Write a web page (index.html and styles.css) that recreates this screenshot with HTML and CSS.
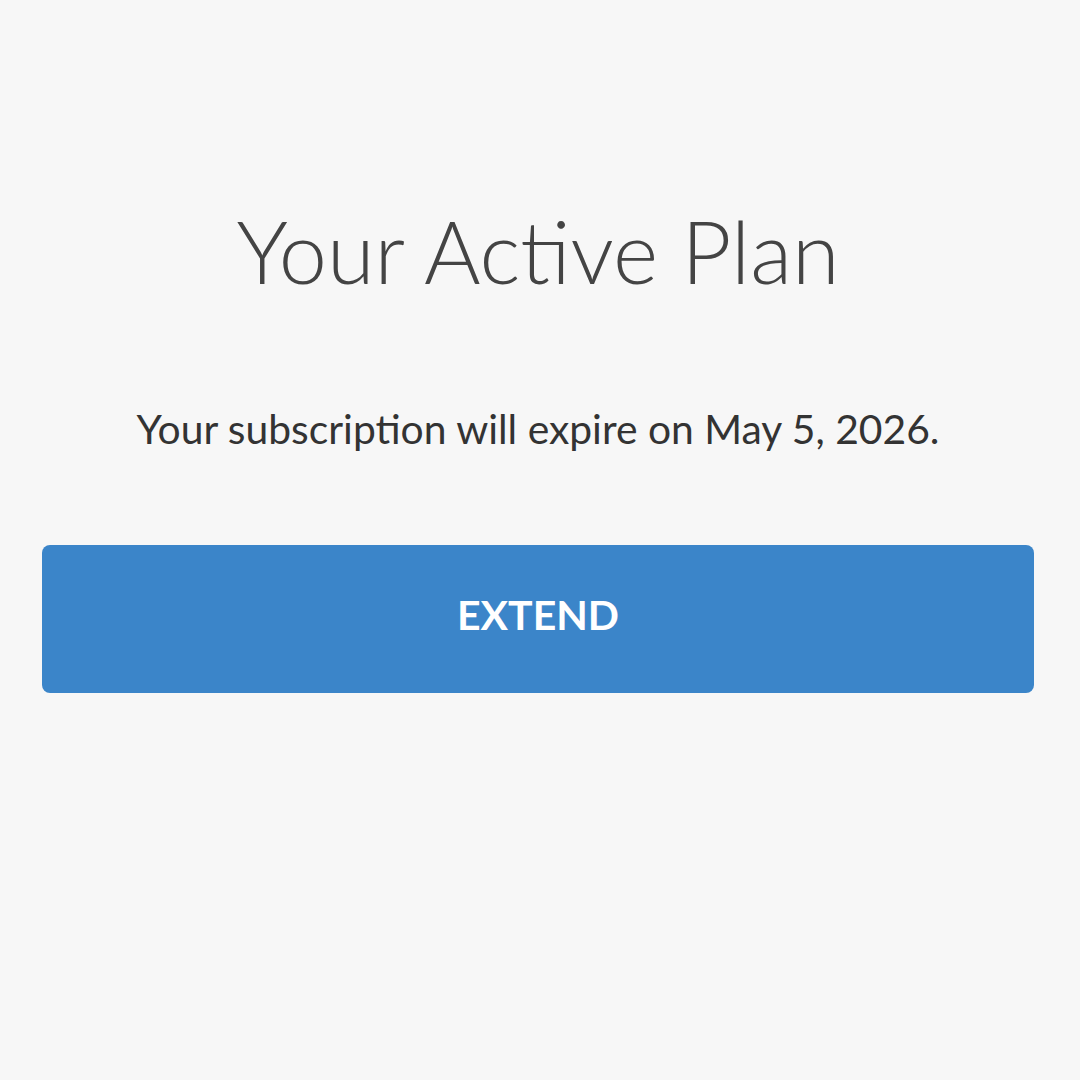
FILE: index.html
```html
<!DOCTYPE html>
<html lang="en">
  <head>
    <meta charset="UTF-8" />
    <meta name="viewport" content="width=device-width, initial-scale=1.0" />
    <title>Your Active Plan</title>
    <link rel="stylesheet" href="styles.css">
  </head>
  <body>
    <div id="wrap">
      <div class="plan">
        <h1 class="plan-title">Your Active Plan</h1>
        <p class="plan-desc">Your subscription will expire on May 5, 2026.</p>
        <button class="plan-btn" type="button">EXTEND</button>
      </div>
    </div>
  </body>
</html>
```

FILE: styles.css
```css
* {
  margin: 0;
  padding: 0;
  box-sizing: border-box;
}
html,
body {
  height: 100%;
}
body {
  background: #f7f7f7;
  font-family: Lato, "Noto Sans", sans-serif;
  color: #333;
}
#wrap {
  padding: 196px 46px 0 42px;
}
.plan {
  display: flex;
  flex-direction: column;
  align-items: center;
}
.plan-title {
  font-size: 86.5px;
  font-weight: 300;
  line-height: 110px;
  color: #444;
}
.plan-desc {
  margin-top: 98px;
  font-size: 40.8px;
  line-height: 50px;
  color: #333;
}
.plan-btn {
  margin-top: 91px;
  width: 100%;
  height: 148px;
  padding-bottom: 10px;
  border: 0 none;
  border-radius: 8px;
  background: #3b85c9;
  color: #fff;
  font-family: inherit;
  font-size: 41px;
  font-weight: 700;
  line-height: 1;
}
```
